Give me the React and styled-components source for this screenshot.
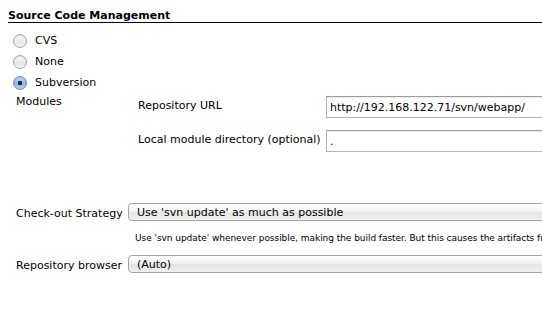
import styled, { createGlobalStyle } from "styled-components";

const GlobalStyle = createGlobalStyle`
  html, body {
    margin: 0;
    padding: 0;
    background: #fff;
    overflow: hidden;
  }
  body {
    font-family: "DejaVu Sans", Verdana, sans-serif;
    font-size: 11px;
    color: #000;
  }
`;

export default function App() {
  return (
    <Page>
      <GlobalStyle />
      <SectionHeader>Source Code Management</SectionHeader>
      <RadioList>
        <RadioRow>
          <Radio />
          <span>CVS</span>
        </RadioRow>
        <RadioRow>
          <Radio />
          <span>None</span>
        </RadioRow>
        <RadioRow>
          <Radio checked />
          <span>Subversion</span>
        </RadioRow>
      </RadioList>

      <ModulesRow>
        <OuterLabel>Modules</OuterLabel>
        <ModuleFields>
          <FieldRow>
            <FieldLabel>Repository URL</FieldLabel>
            <TextBox>http://192.168.122.71/svn/webapp/</TextBox>
          </FieldRow>
          <FieldRow>
            <FieldLabel>Local module directory (optional)</FieldLabel>
            <TextBox>.</TextBox>
          </FieldRow>
        </ModuleFields>
      </ModulesRow>

      <SelectRow>
        <OuterLabel $narrow>Check-out Strategy</OuterLabel>
        <SelectBox>Use 'svn update' as much as possible</SelectBox>
      </SelectRow>
      <HelpText>
        Use 'svn update' whenever possible, making the build faster. But this causes the artifacts from the previous build to remain when a new build starts.
      </HelpText>
      <SelectRow $tight>
        <OuterLabel $narrow>Repository browser</OuterLabel>
        <SelectBox>(Auto)</SelectBox>
      </SelectRow>
    </Page>
  );
}

const Page = styled.div`
  width: 760px;
  padding-top: 8px;
`;

const SectionHeader = styled.div`
  margin-left: 8px;
  font-weight: bold;
  font-size: 11px;
  line-height: 13px;
  padding-top: 1px;
  border-bottom: 1px solid #000;
`;

const RadioList = styled.div`
  display: flex;
  flex-direction: column;
  padding-top: 7px;
  padding-left: 13px;
`;

const RadioRow = styled.div`
  display: flex;
  align-items: center;
  gap: 8px;
  height: 21px;
  font-size: 11px;
`;

const Radio = styled.span`
  width: 14px;
  height: 14px;
  border-radius: 50%;
  box-sizing: border-box;
  border: 1px solid ${(p) => (p.checked ? "#6d8db5" : "#a8a8a8")};
  background: ${(p) =>
    p.checked
      ? "radial-gradient(circle at 50% 50%, #1b2a3d 0 2px, transparent 2.5px), linear-gradient(#c9ddf4, #8fb4e0 55%, #b8d3f3)"
      : "linear-gradient(#fdfdfd, #e6e6e6 60%, #f4f4f4)"};
  box-shadow: inset 0 1px 1px rgba(0, 0, 0, 0.12);
  flex: none;
`;

const ModulesRow = styled.div`
  display: flex;
  align-items: flex-start;
  padding-left: 16px;
  margin-top: 2px;
`;

const OuterLabel = styled.div`
  width: ${(p) => (p.$narrow ? "112px" : "122px")};
  flex: none;
  line-height: 13px;
  padding-top: ${(p) => (p.$narrow ? "3px" : "0px")};
`;

const ModuleFields = styled.div`
  display: flex;
  flex-direction: column;
  gap: 12px;
  padding-top: 1px;
`;

const FieldRow = styled.div`
  display: flex;
  align-items: flex-start;
`;

const FieldLabel = styled.div`
  width: 188px;
  flex: none;
  line-height: 13px;
  padding-top: 3px;
`;

const TextBox = styled.div`
  width: 300px;
  height: 22px;
  box-sizing: border-box;
  border: 1px solid #b4b4b4;
  border-top-color: #9c9c9c;
  box-shadow: inset 0 1px 1px rgba(0, 0, 0, 0.08);
  padding: 4px 3px 0;
  font-size: 11px;
  line-height: 13px;
  background: #fff;
`;

const SelectRow = styled.div`
  display: flex;
  align-items: center;
  padding-left: 16px;
  margin-top: ${(p) => (p.$tight ? "11px" : "51px")};
`;

const SelectBox = styled.div`
  width: 480px;
  height: 18px;
  box-sizing: border-box;
  border: 1px solid #a3a3a3;
  border-radius: 4px;
  background: linear-gradient(#ffffff, #f3f3f3 45%, #e4e4e4 55%, #f0f0f0);
  padding: 2px 0 0 8px;
  font-size: 11px;
  line-height: 13px;
  white-space: nowrap;
`;

const HelpText = styled.div`
  margin-left: 135px;
  margin-top: 12px;
  font-size: 9px;
  line-height: 11px;
  letter-spacing: -0.05px;
  white-space: nowrap;
`;
